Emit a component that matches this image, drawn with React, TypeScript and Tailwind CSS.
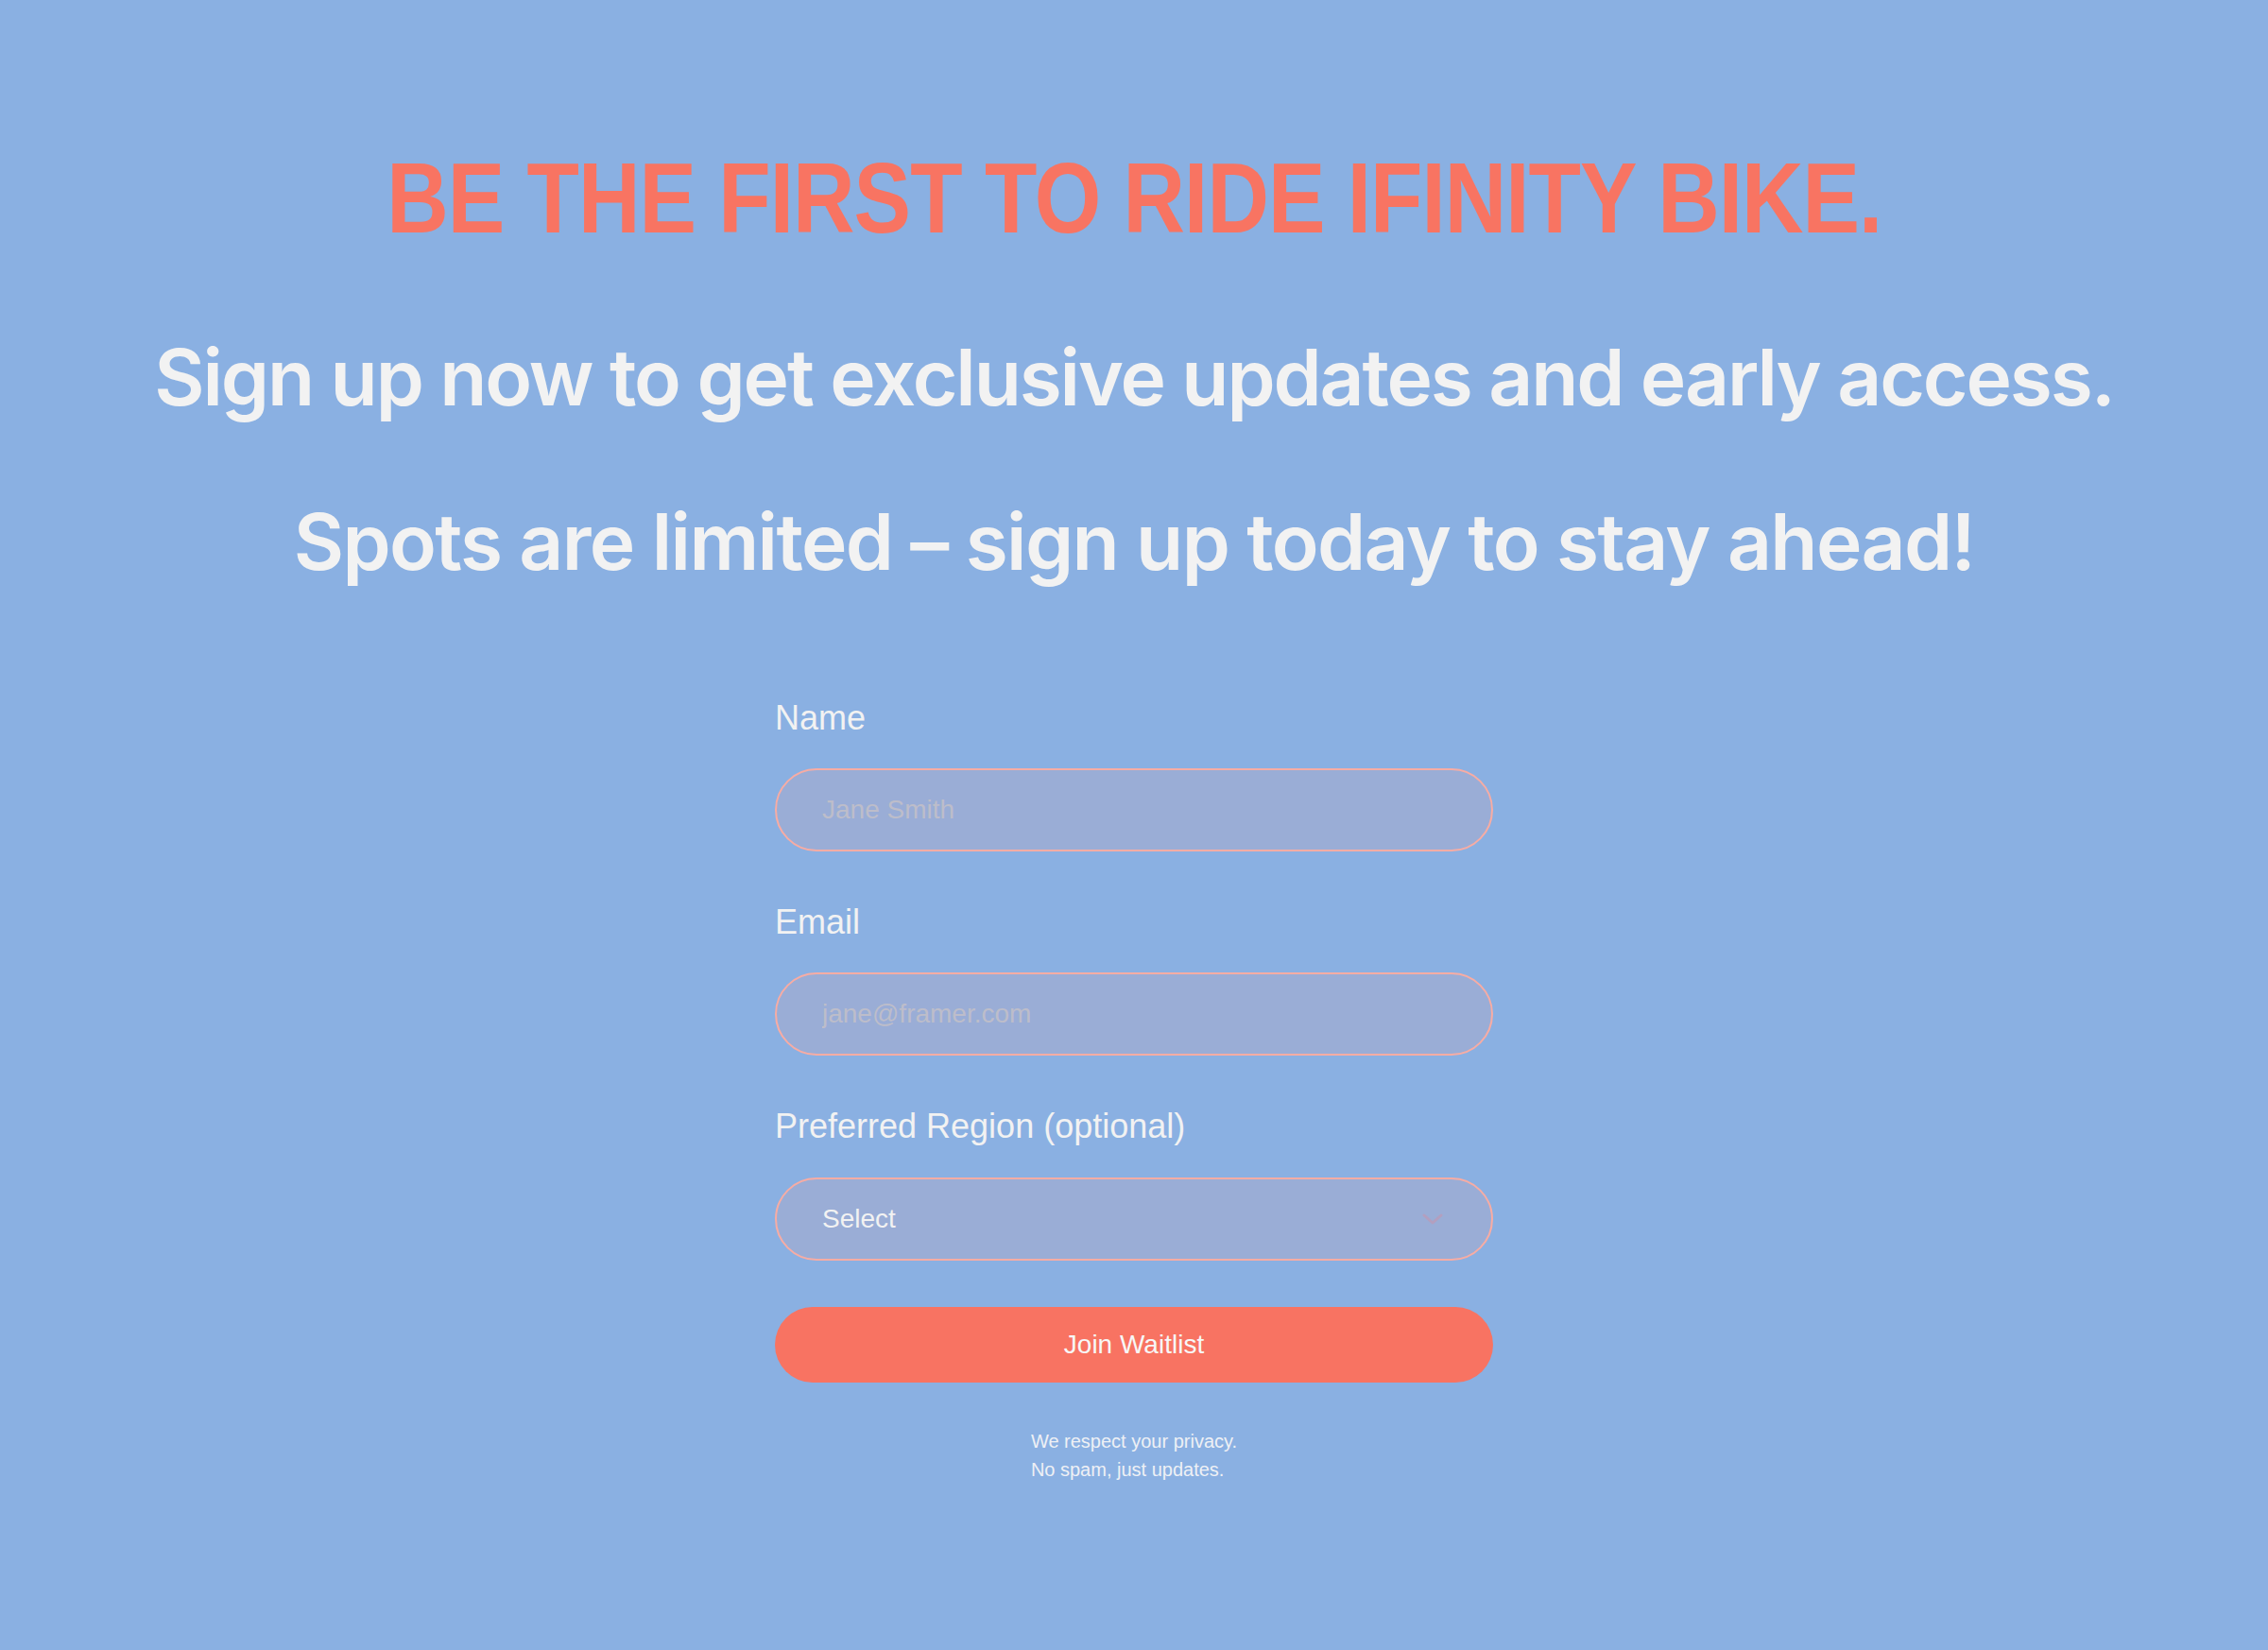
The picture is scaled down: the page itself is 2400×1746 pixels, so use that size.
import { useState } from 'react';

const REGIONS = ['North America', 'Europe', 'Asia Pacific', 'Latin America', 'Middle East & Africa'];

function Field({ label, children }: { label: string; children: React.ReactNode }) {
  return (
    <label className="flex flex-col gap-[32px]">
      <span className="text-[36px] leading-[1.2] text-[#f2f2f2]">{label}</span>
      {children}
    </label>
  );
}

export default function App() {
  const [name, setName] = useState('');
  const [email, setEmail] = useState('');
  const [region, setRegion] = useState('');

  const inputCls =
    'h-[88px] w-full rounded-full border-2 border-[#f7aca4] bg-[#9aadd6] px-[48px] text-[28px] text-[#f2f2f2] outline-none placeholder:text-[#bdbdca]';

  return (
    <div className="min-h-screen w-full bg-[#8ab0e2] font-['Liberation_Sans',Arial,sans-serif]">
      <div className="flex flex-col items-center pt-[156px]">
        {/* no condensed face installed, so squeeze the bold one */}
        <h1 className="inline-block scale-x-[0.855] whitespace-nowrap font-['Liberation_Sans',sans-serif] text-[106px] font-bold leading-none tracking-[-0.01em] text-[#f87462]">
          BE THE FIRST TO RIDE IFINITY BIKE.
        </h1>
        <p className="mt-[97px] whitespace-nowrap font-['Inter',sans-serif] text-[82px] font-semibold leading-none tracking-[-0.026em] text-[#f2f2f2]">
          Sign up now to get exclusive updates and early access.
        </p>
        <p className="mt-[92px] whitespace-nowrap font-['Inter',sans-serif] text-[82px] font-semibold leading-none tracking-[-0.02em] text-[#f2f2f2]">
          Spots are limited – sign up today to stay ahead!
        </p>

        <form className="mt-[123px] flex w-[760px] flex-col" onSubmit={(e) => e.preventDefault()}>
          <Field label="Name">
            <input
              className={inputCls}
              placeholder="Jane Smith"
              value={name}
              onChange={(e) => setName(e.target.value)}
            />
          </Field>
          <div className="mt-[53px]">
            <Field label="Email">
              <input
                className={inputCls}
                type="email"
                placeholder="jane@framer.com"
                value={email}
                onChange={(e) => setEmail(e.target.value)}
              />
            </Field>
          </div>
          <div className="mt-[53px]">
            <Field label="Preferred Region (optional)">
              <div className="relative">
                <select
                  className={`${inputCls} appearance-none`}
                  value={region}
                  onChange={(e) => setRegion(e.target.value)}
                >
                  <option value="">Select</option>
                  {REGIONS.map((r) => (
                    <option key={r} value={r}>
                      {r}
                    </option>
                  ))}
                </select>
                <svg
                  className="pointer-events-none absolute right-[53px] top-1/2 -translate-y-1/2"
                  width="22"
                  height="12"
                  viewBox="0 0 22 12"
                  fill="none"
                >
                  <polyline
                    points="2,2 11,10 20,2"
                    stroke="#b39fbf"
                    strokeWidth="3"
                    strokeLinecap="round"
                    strokeLinejoin="round"
                  />
                </svg>
              </div>
            </Field>
          </div>
          <button
            type="submit"
            className="mt-[49px] h-[80px] w-full rounded-full bg-[#f87362] text-[28px] text-[#f7f7f7]"
          >
            Join Waitlist
          </button>
          <div className="mt-[47px] flex justify-center">
            <p className="text-left text-[20px] leading-[30px] text-[#eef0f5]">
              We respect your privacy.
              <br />
              No spam, just updates.
            </p>
          </div>
        </form>
      </div>
    </div>
  );
}
